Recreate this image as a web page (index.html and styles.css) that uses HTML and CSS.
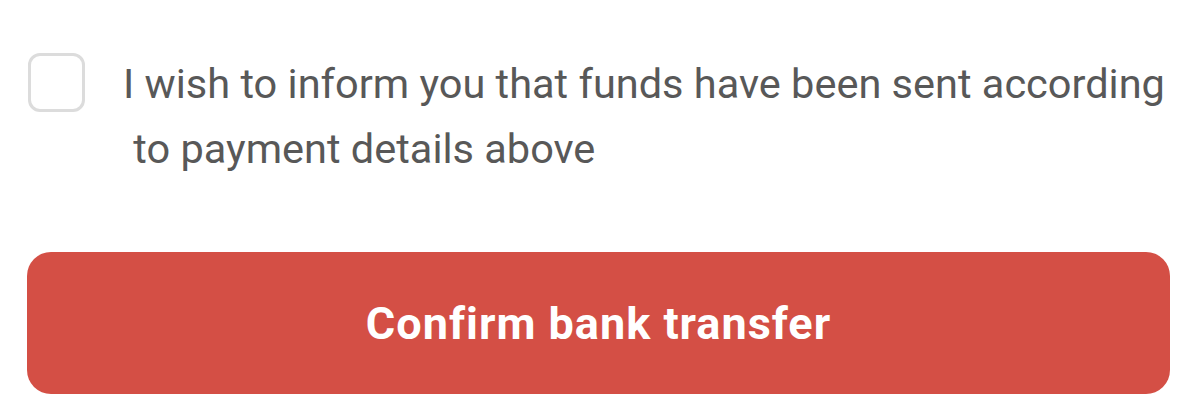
FILE: index.html
```html
<!DOCTYPE html>
<html>
<head>
<meta charset="utf-8">
<link rel="stylesheet" href="styles.css">
</head>
<body>
<div class="panel">
  <label class="consent">
    <span class="box"></span>
    <span class="consent-text">I wish to inform you that funds have been sent according &nbsp;to payment details above</span>
  </label>
  <button class="confirm" type="button">Confirm bank transfer</button>
</div>
</body>
</html>
```
FILE: styles.css
```css
html, body {
  margin: 0;
  padding: 0;
  background: #ffffff;
}
body {
  font-family: Roboto, "Liberation Sans", sans-serif;
}
.panel {
  padding: 53px 0 0 27px;
  width: 1173px;
}
.consent {
  display: flex;
  align-items: flex-start;
  gap: 38px;
  padding-left: 1px;
}
.box {
  flex: none;
  width: 51px;
  height: 53px;
  border: 3px solid #dcdcdc;
  border-radius: 12px;
}
.consent-text {
  font-size: 41.5px;
  line-height: 65px;
  color: #585858;
  margin-top: -2px;
}
.confirm {
  display: block;
  margin-top: 71px;
  width: 1143px;
  height: 142px;
  border: none;
  border-radius: 24px;
  background: #d44f45;
  color: #ffffff;
  font-family: Roboto, "Liberation Sans", sans-serif;
  font-weight: 700;
  font-size: 45px;
  letter-spacing: 1px;
  cursor: pointer;
}
```
